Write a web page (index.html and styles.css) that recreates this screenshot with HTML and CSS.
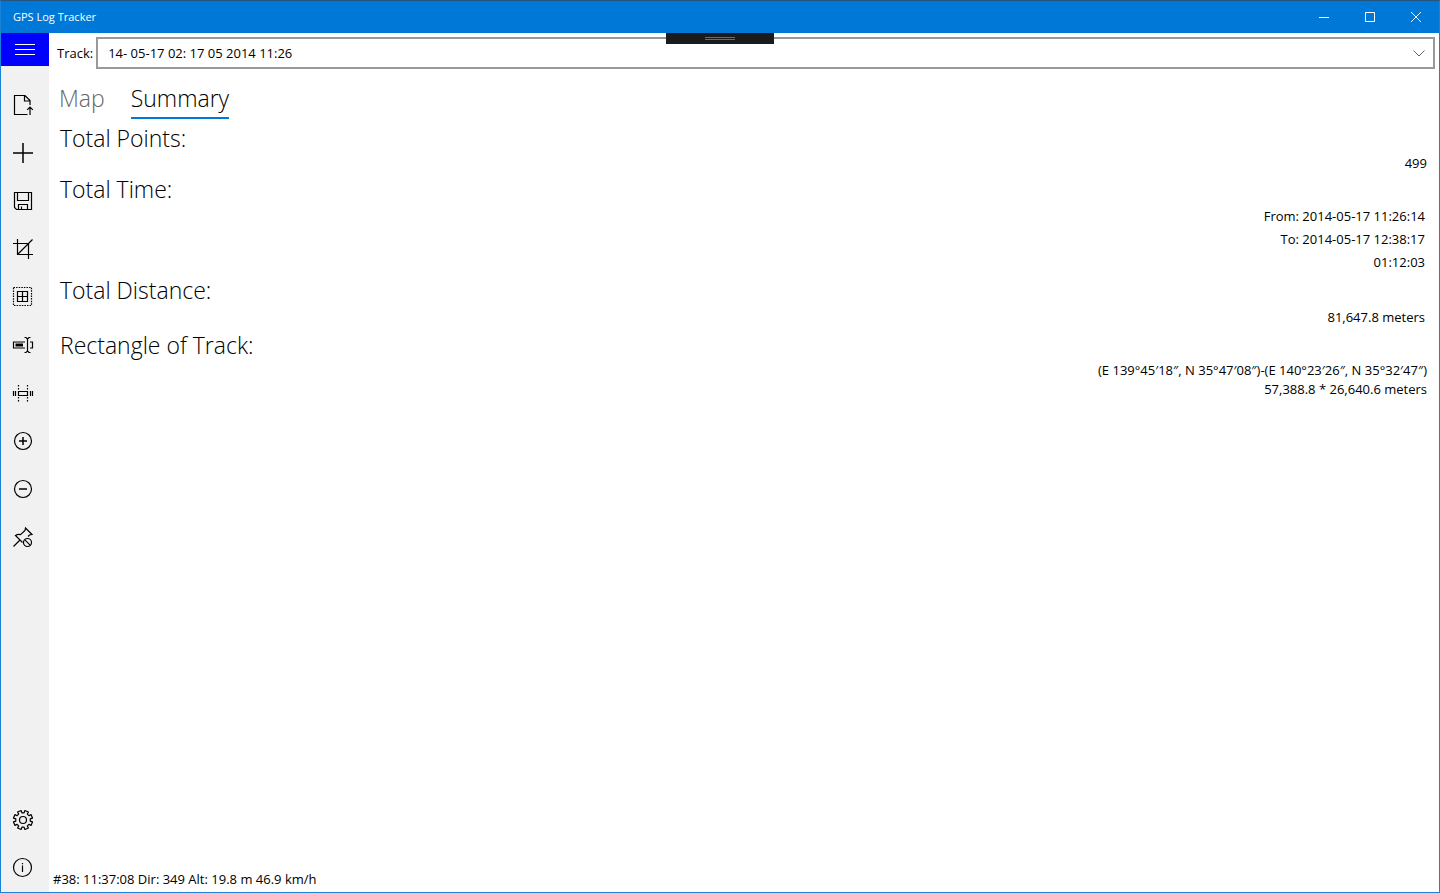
FILE: index.html
```html
<!DOCTYPE html>
<html lang="en">
<head>
  <meta charset="UTF-8">
  <meta name="viewport" content="width=device-width, initial-scale=1">
  <title>GPS Log Tracker</title>
  <link rel="stylesheet" href="styles.css">
</head>
<body>
  <div class="window">
    <header class="titlebar">
      <h1 class="title">GPS Log Tracker</h1>
      <div class="window-controls">
        <button type="button" aria-label="Minimize"><svg width="10" height="10" viewBox="0 0 10 10"><path d="M0 5.5h10"/></svg></button>
        <button type="button" aria-label="Maximize"><svg width="10" height="10" viewBox="0 0 10 10"><path d="M.5.5h9v9h-9z"/></svg></button>
        <button type="button" aria-label="Close"><svg width="10" height="10" viewBox="0 0 10 10"><path d="M0 0l10 10M10 0L0 10"/></svg></button>
      </div>
      <div class="debug-handle"></div>
    </header>

    <div class="body">
      <nav class="sidebar">
        <button type="button" class="menu-btn" aria-label="Menu">
          <svg width="20" height="11" viewBox="0 0 20 11"><path d="M0 .5h20M0 5.5h20M0 10.5h20"/></svg>
        </button>

        <div class="tools">
          <button type="button" class="tool" aria-label="Open file">
            <svg viewBox="0 0 24 24"><path d="M16.500 21.500h-13v-19h10.500l5 5v4.500M13.500 2.500v5.500h5.500M19 22v-8M16.200 16.800l2.800-2.800 2.800 2.800"/></svg>
          </button>
          <button type="button" class="tool" aria-label="Add">
            <svg viewBox="0 0 24 24"><path class="soft" d="M2 12h20M12 2v20"/></svg>
          </button>
          <button type="button" class="tool" aria-label="Save">
            <svg viewBox="0 0 24 24"><path d="M3.500 3.500h17v17h-15l-2-2zM6.500 3.500v8h11v-8M7.500 20.500v-5h9v5M10.500 20.500v-3"/></svg>
          </button>
          <button type="button" class="tool" aria-label="Crop">
            <svg viewBox="0 0 24 24"><path d="M2 6.500h15.500V22M6.500 2v15.500H22M6.500 17.500L21.500 2.500"/></svg>
          </button>
          <button type="button" class="tool" aria-label="Select all">
            <svg viewBox="0 0 24 24"><path stroke-dasharray="1.500 1.100" d="M2.500 2.500h18v18h-18z"/><path d="M6.500 6.500h10v10h-10zM11.500 6.500v10M6.500 11.500h10"/></svg>
          </button>
          <button type="button" class="tool" aria-label="Rename">
            <svg viewBox="0 0 24 24"><path d="M14 9H2.500v6H14M19 9h2.500v6H19M16.500 6v12M13.500 4.500h1.500l1.500 1.500 1.500-1.500h1.500M13.500 19.500h1.500l1.500-1.500 1.500 1.500h1.500"/><path class="bar" d="M4.500 12h7.500"/></svg>
          </button>
          <button type="button" class="tool" aria-label="Split track">
            <svg viewBox="0 0 24 24"><path d="M7.500 10.500h9v4h-9zM2.500 10v5M4.500 10v5M19.500 10v5M21.500 10v5"/><path stroke-dasharray="1.500 1.500" d="M7.500 4v6M16.500 4v6M7.500 16v5M16.500 16v5"/></svg>
          </button>
          <button type="button" class="tool" aria-label="Zoom in">
            <svg viewBox="0 0 24 24"><circle cx="12" cy="12" r="8.500"/><path class="soft" d="M8 12h8M12 8v8"/></svg>
          </button>
          <button type="button" class="tool" aria-label="Zoom out">
            <svg viewBox="0 0 24 24"><circle cx="12" cy="12" r="8.500"/><path class="soft" d="M8 12h8"/></svg>
          </button>
          <button type="button" class="tool" aria-label="Clear pin">
            <svg viewBox="0 0 24 24"><path d="M2.500 21.500l6.500-6.500M11.500 17.500l-7-7c1.500-1 3.500-1.200 5-.8L14 5.500l.5-2.500 6.500 6.500-2.500.5-1.500 1.500"/><circle cx="16.500" cy="17.500" r="4"/><path d="M13.700 14.700l5.600 5.600"/></svg>
          </button>
        </div>

        <div class="tools">
          <button type="button" class="tool" aria-label="Settings">
            <svg viewBox="-12 -12 24 24"><circle r="3.500"/><path stroke-linejoin="round" d="M1.100-7.200L1.900-9.500 5.400-8 4.300-5.900 5.900-4.300 8-5.400 9.500-1.900 7.200-1.100V1.100L9.500 1.900 8 5.400 5.900 4.300 4.300 5.900 5.400 8 1.900 9.500 1.100 7.200H-1.100L-1.900 9.500-5.400 8-4.300 5.900-5.900 4.300-8 5.400-9.500 1.900-7.200 1.100V-1.100L-9.500-1.900-8-5.400-5.900-4.300-4.300-5.900-5.400-8-1.900-9.500-1.100-7.200z"/></svg>
          </button>
          <button type="button" class="tool" aria-label="About">
            <svg viewBox="0 0 24 24"><circle cx="11.500" cy="11.500" r="9"/><path d="M11.500 9.500V16M11.500 7v1.300"/></svg>
          </button>
        </div>
      </nav>

      <main class="main">
        <div class="track-row">
          <label for="track">Track:</label>
          <div class="track-box">
            <select id="track">
              <option>14- 05-17 02: 17 05 2014 11:26</option>
            </select>
            <svg class="chevron" width="12" height="7" viewBox="0 0 12 7"><path d="M.5.500L6 6 11.500.500"/></svg>
          </div>
        </div>

        <div class="tabs" role="tablist">
          <button type="button" role="tab" class="tab" aria-selected="false">Map</button>
          <button type="button" role="tab" class="tab active" aria-selected="true">Summary</button>
        </div>

        <div class="summary" role="tabpanel">
          <section>
            <h2>Total Points:</h2>
            <p>499</p>
          </section>
          <section class="loose">
            <h2>Total Time:</h2>
            <p>From: 2014-05-17 11:26:14</p>
            <p>To: 2014-05-17 12:38:17</p>
            <p>01:12:03</p>
          </section>
          <section class="loose">
            <h2>Total Distance:</h2>
            <p>81,647.8 meters</p>
          </section>
          <section>
            <h2>Rectangle of Track:</h2>
            <p>(E 139°45′18″, N 35°47′08″)-(E 140°23′26″, N 35°32′47″)</p>
            <p>57,388.8 * 26,640.6 meters</p>
          </section>
        </div>

        <footer class="status">#38: 11:37:08 Dir: 349 Alt: 19.8 m 46.9 km/h</footer>
      </main>
    </div>
  </div>
</body>
</html>
```
FILE: styles.css
```css
* {
  box-sizing: border-box;
}

body {
  margin: 0;
  font-family: "Segoe UI", "Open Sans", "Noto Sans", sans-serif;
  font-size: 13px;
  color: #000;
  background: #fff;
}

h1, h2, p {
  margin: 0;
}

button {
  display: flex;
  align-items: center;
  justify-content: center;
  padding: 0;
  border: none;
  background: none;
  font-family: inherit;
  color: inherit;
}

svg {
  fill: none;
  stroke: currentColor;
  stroke-width: 1;
}

.window {
  display: flex;
  flex-direction: column;
  min-height: 100vh;
  border: 1px solid #1883d7;
  border-top-color: #26547c;
}

/* title bar */
.titlebar {
  position: relative;
  display: flex;
  justify-content: space-between;
  height: 32px;
  background: #0078d7;
  color: #fff;
}

.title {
  padding-left: 12px;
  font-size: 11px;
  font-weight: 500;
  line-height: 32px;
}

.window-controls {
  display: flex;
}

.window-controls button {
  width: 46px;
}

.debug-handle {
  position: absolute;
  top: 100%;
  left: 50%;
  width: 108px;
  height: 11px;
  transform: translateX(-50%);
  background: #1b1b1b;
  z-index: 1;
}

.debug-handle::before {
  content: "";
  position: absolute;
  top: 4px;
  left: 39px;
  width: 30px;
  height: 1px;
  border: solid #6b6b6b;
  border-width: 1px 0;
}

.body {
  display: flex;
  flex: 1;
}

/* sidebar */
.sidebar {
  display: flex;
  flex-direction: column;
  width: 48px;
  background: #f1f1f1;
}

.menu-btn {
  height: 33px;
  margin-bottom: 15px;
  background: #00f;
  color: #fff;
}

.tools:last-child {
  margin-top: auto;
}

.tool {
  justify-content: flex-start;
  width: 100%;
  height: 48px;
  padding-left: 10px;
}

.tool svg {
  width: 24px;
  height: 24px;
  stroke-width: 1.2;
}

.tool .soft {
  stroke-width: 1.5;
}

.tool .bar {
  stroke-width: 3;
}

/* content */
.main {
  display: flex;
  flex-direction: column;
  flex: 1;
}

.track-row {
  display: flex;
  align-items: center;
  gap: 3px;
  padding: 4px 4px 0 8px;
}

.track-box {
  position: relative;
  flex: 1;
}

.track-box select {
  display: block;
  width: 100%;
  height: 32px;
  padding: 0 32px 0 10px;
  appearance: none;
  border: 2px solid #999;
  border-radius: 0;
  background: #fff;
  color: #000;
  font: inherit;
}

.chevron {
  position: absolute;
  top: 13px;
  right: 10px;
  color: #666;
  pointer-events: none;
}

.tabs {
  display: flex;
  gap: 26px;
  padding: 15px 10px 0;
}

.tab {
  padding-bottom: 5px;
  border-bottom: 2px solid transparent;
  font-size: 23px;
  font-weight: 300;
  line-height: 28px;
  color: #666;
}

.tab.active {
  border-color: #0078d7;
  color: #000;
}

.summary {
  display: flex;
  flex-direction: column;
  flex: 1;
  gap: 2px;
  padding: 5px 12px 0 11px;
}

.summary h2 {
  padding-bottom: 2px;
  font-size: 23px;
  font-weight: 300;
  line-height: 28px;
}

.summary p {
  line-height: 19px;
  text-align: right;
}

.loose p {
  padding-right: 2px;
  line-height: 23px;
}

.status {
  padding-left: 4px;
  line-height: 26px;
}
```
